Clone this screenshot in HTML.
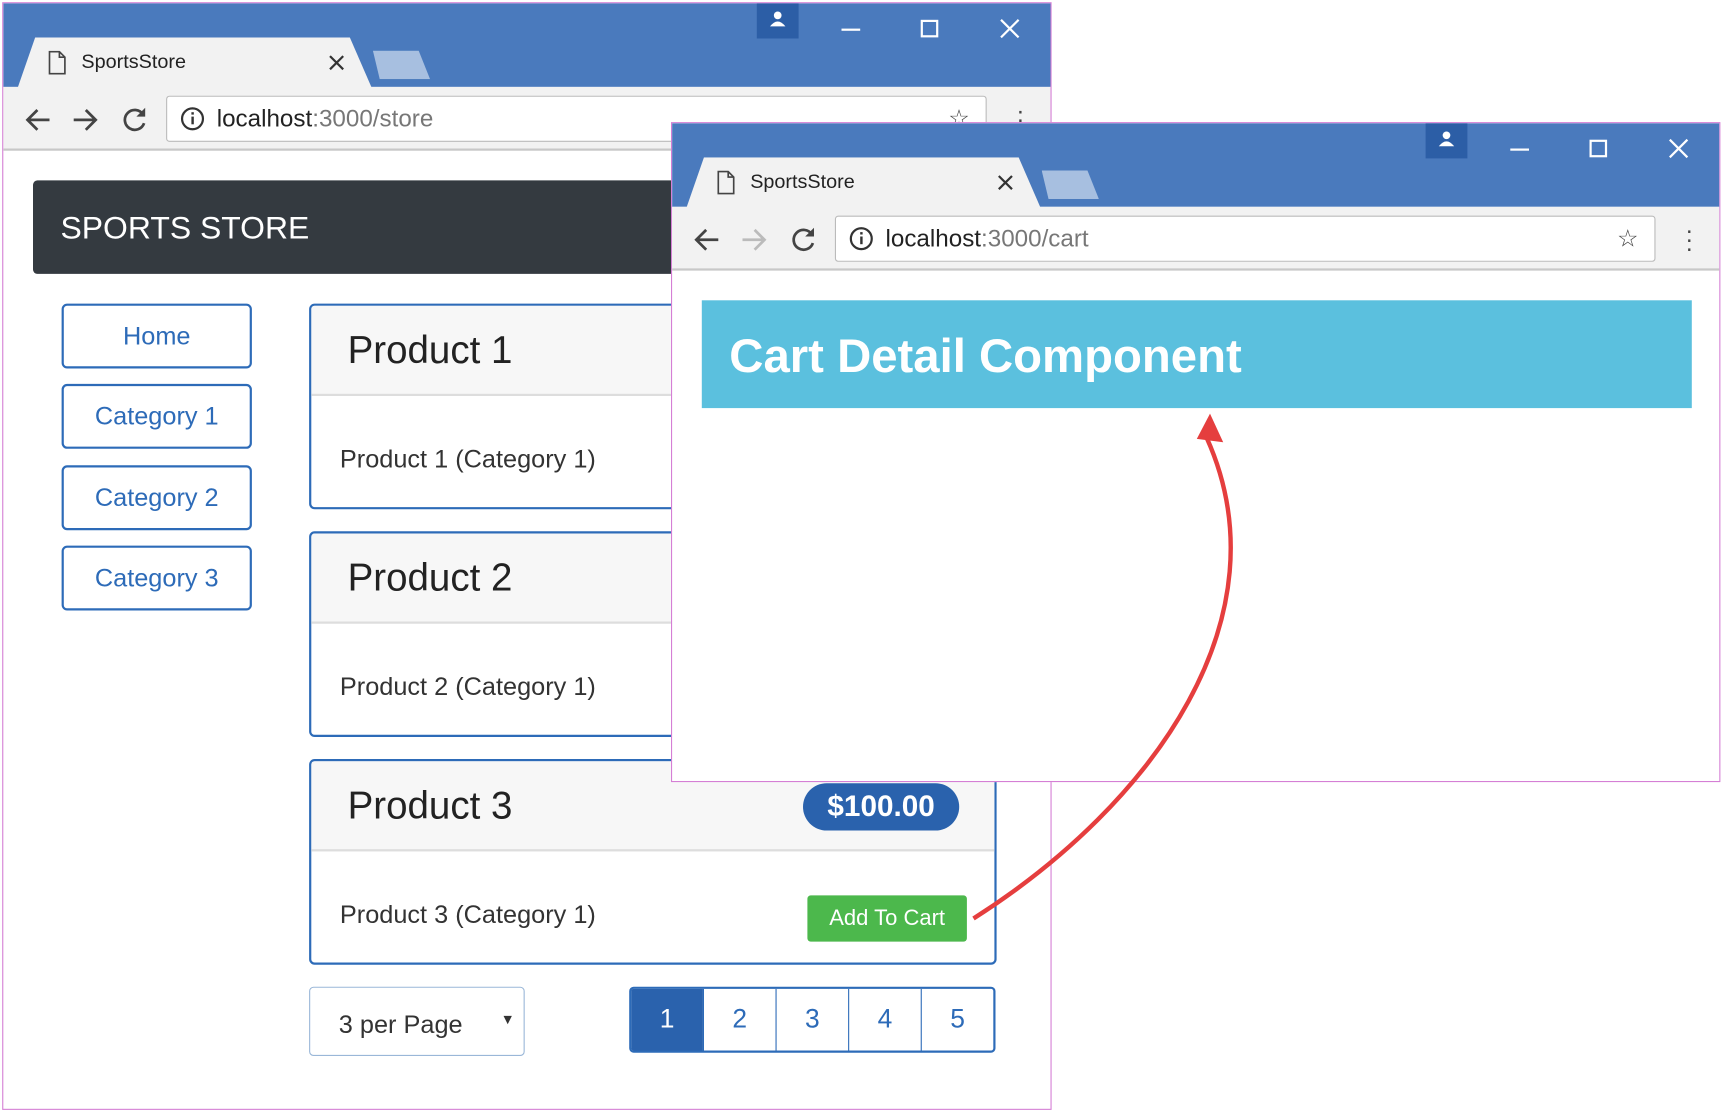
<!DOCTYPE html>
<html><head><meta charset="utf-8"><style>
*{box-sizing:border-box;margin:0;padding:0}
html,body{width:1725px;height:1113px;overflow:hidden;background:#fff;font-family:"Liberation Sans",sans-serif}
#s{position:absolute;left:0;top:0;width:1568px;height:1012px;transform:scale(1.1,1.1);transform-origin:0 0}
.a{position:absolute}
.win{position:absolute;border:1.5px solid #d57fd5;background:#fff;overflow:hidden}
.tb{position:absolute;left:0;right:0;top:0;height:76px;background:#4a7abd}
.tool{position:absolute;left:0;right:0;top:76px;height:58px;background:#f2f2f2;border-bottom:2px solid #c8c8c8}
.tab{position:absolute;top:31px;height:46px;background:#f2f2f2;clip-path:polygon(0 100%,16px 0,calc(100% - 20px) 0,100% 100%)}
.addr{position:absolute;top:8px;height:42px;background:#fff;border:1.5px solid #bbb;border-radius:3px;font-size:22px;color:#222;line-height:39px;padding-left:45px}
.addr span{color:#777}
.btn{position:absolute;left:53px;width:173px;height:59px;border:2px solid #2d6bb8;border-radius:5px;color:#2d6bb8;font-size:23px;text-align:center;line-height:55px}
.card{position:absolute;left:278px;width:625px;height:187px;border:2px solid #2d6bb8;border-radius:5px;overflow:hidden}
.card .h{height:82px;background:#f7f7f7;border-bottom:2px solid #ddd;font-size:35px;padding-left:33px;line-height:82px;color:#222}
.card .b{font-size:23px;color:#333;padding-left:26px;line-height:114px}
</style></head><body><div id="s">
<!-- window 1 -->
<div class="win" style="left:2px;top:2px;width:954px;height:1007px">
 <div class="tb"></div>
 <div class="a" style="left:685px;top:0;width:38px;height:32px;background:#2c5ea6"></div>
 <svg class="a" style="left:695px;top:6px" width="18" height="16"><circle cx="9" cy="5" r="3.5" fill="#fff"/><path d="M2 15 Q9 6 16 15Z" fill="#fff"/></svg>
 <div class="a" style="left:762px;top:23px;width:17px;height:2px;background:#fff"></div>
 <div class="a" style="left:834px;top:15px;width:16px;height:16px;border:2px solid #fff"></div>
 <svg class="a" style="left:905px;top:13px" width="20" height="20"><path d="M2 2L18 18M18 2L2 18" stroke="#fff" stroke-width="2"/></svg>
 <div class="tab" style="left:13px;width:322px"></div>
 <div class="a" style="left:336px;top:43px;width:52px;height:26px;background:#a7bfe0;clip-path:polygon(0 0,80% 0,100% 100%,12% 100%)"></div>
 <svg class="a" style="left:40px;top:43px" width="18" height="22"><path d="M2 1H11L16 6V21H2Z M11 1V6H16" fill="none" stroke="#444" stroke-width="1.5"/></svg>
 <div class="a" style="left:71px;top:43px;font-size:18px;color:#222">SportsStore</div>
 <svg class="a" style="left:295px;top:46px" width="16" height="16"><path d="M2 2L14 14M14 2L2 14" stroke="#333" stroke-width="2"/></svg>
 <div class="tool">
  <svg class="a" style="left:18px;top:18px" width="26" height="24"><path d="M24 12H4M13 3L4 12L13 21" fill="none" stroke="#444" stroke-width="2.5"/></svg>
  <svg class="a" style="left:62px;top:18px" width="26" height="24"><path d="M2 12H22M13 3L22 12L13 21" fill="none" stroke="#444" stroke-width="2.5"/></svg>
  <svg class="a" style="left:107px;top:17px" width="26" height="26"><path d="M20 8A9 9 0 1 0 21 16" fill="none" stroke="#444" stroke-width="2.5"/><path d="M22 2V10H14Z" fill="#444"/></svg>
  <div class="addr" style="left:148px;width:746px">localhost<span>:3000/store</span>
   <svg class="a" style="left:12px;top:9px" width="22" height="22"><circle cx="11" cy="11" r="9.5" fill="none" stroke="#333" stroke-width="2"/><rect x="10" y="9" width="2.2" height="7" fill="#333"/><rect x="10" y="5" width="2.2" height="2.2" fill="#333"/></svg>
   <div class="a" style="left:710px;top:0;font-size:22px;color:#444">☆</div>
  </div>
  <div class="a" style="left:921px;top:18px;font-size:22px;color:#444;line-height:8px">·<br>·<br>·</div>
 </div>
 <div class="a" style="left:27px;top:161px;width:900px;height:85px;background:#343a40;border-radius:4px;color:#fff;font-size:29px;line-height:88px;padding-left:25px">SPORTS STORE</div>
 <div class="btn" style="top:273px">Home</div>
 <div class="btn" style="top:346px">Category 1</div>
 <div class="btn" style="top:420px">Category 2</div>
 <div class="btn" style="top:493px">Category 3</div>
 <div class="card" style="top:273px"><div class="h">Product 1</div><div class="b">Product 1 (Category 1)</div></div>
 <div class="card" style="top:480px"><div class="h">Product 2</div><div class="b">Product 2 (Category 1)</div></div>
 <div class="card" style="top:687px"><div class="h">Product 3</div><div class="b">Product 3 (Category 1)</div>
  <div class="a" style="left:447px;top:20px;width:142px;height:43px;background:#2a62ad;border-radius:22px;color:#fff;font-weight:bold;font-size:27px;text-align:center;line-height:43px">$100.00</div>
  <div class="a" style="left:451px;top:122px;width:145px;height:42px;background:#4cb84c;border-radius:3px;color:#fff;font-size:20px;text-align:center;line-height:42px">Add To Cart</div>
 </div>
 <div class="a" style="left:278px;top:894px;width:196px;height:63px;border:1.5px solid #9ab7d8;border-radius:4px;font-size:23px;color:#333;line-height:66px;padding-left:26px">3 per Page<span style="position:absolute;right:8px;top:-4px;font-size:13px">▼</span></div>
 <div class="a" style="left:569px;top:894px;width:333px;height:60px;border:2px solid #2d6bb8;border-radius:4px;display:flex;overflow:hidden">
  <div style="flex:1;background:#2a62ad;color:#fff;font-size:24px;text-align:center;line-height:56px">1</div>
  <div style="flex:1;border-left:1.5px solid #2d6bb8;color:#2d6bb8;font-size:24px;text-align:center;line-height:56px">2</div>
  <div style="flex:1;border-left:1.5px solid #2d6bb8;color:#2d6bb8;font-size:24px;text-align:center;line-height:56px">3</div>
  <div style="flex:1;border-left:1.5px solid #2d6bb8;color:#2d6bb8;font-size:24px;text-align:center;line-height:56px">4</div>
  <div style="flex:1;border-left:1.5px solid #2d6bb8;color:#2d6bb8;font-size:24px;text-align:center;line-height:56px">5</div>
 </div>
</div>
<!-- window 2 -->
<div class="win" style="left:610px;top:111px;width:954px;height:600px">
 <div class="tb"></div>
 <div class="a" style="left:685px;top:0;width:38px;height:32px;background:#2c5ea6"></div>
 <svg class="a" style="left:695px;top:6px" width="18" height="16"><circle cx="9" cy="5" r="3.5" fill="#fff"/><path d="M2 15 Q9 6 16 15Z" fill="#fff"/></svg>
 <div class="a" style="left:762px;top:23px;width:17px;height:2px;background:#fff"></div>
 <div class="a" style="left:834px;top:15px;width:16px;height:16px;border:2px solid #fff"></div>
 <svg class="a" style="left:905px;top:13px" width="20" height="20"><path d="M2 2L18 18M18 2L2 18" stroke="#fff" stroke-width="2"/></svg>
 <div class="tab" style="left:13px;width:322px"></div>
 <div class="a" style="left:336px;top:43px;width:52px;height:26px;background:#a7bfe0;clip-path:polygon(0 0,80% 0,100% 100%,12% 100%)"></div>
 <svg class="a" style="left:40px;top:43px" width="18" height="22"><path d="M2 1H11L16 6V21H2Z M11 1V6H16" fill="none" stroke="#444" stroke-width="1.5"/></svg>
 <div class="a" style="left:71px;top:43px;font-size:18px;color:#222">SportsStore</div>
 <svg class="a" style="left:295px;top:46px" width="16" height="16"><path d="M2 2L14 14M14 2L2 14" stroke="#333" stroke-width="2"/></svg>
 <div class="tool">
  <svg class="a" style="left:18px;top:18px" width="26" height="24"><path d="M24 12H4M13 3L4 12L13 21" fill="none" stroke="#444" stroke-width="2.5"/></svg>
  <svg class="a" style="left:62px;top:18px" width="26" height="24"><path d="M2 12H22M13 3L22 12L13 21" fill="none" stroke="#bbb" stroke-width="2.5"/></svg>
  <svg class="a" style="left:107px;top:17px" width="26" height="26"><path d="M20 8A9 9 0 1 0 21 16" fill="none" stroke="#444" stroke-width="2.5"/><path d="M22 2V10H14Z" fill="#444"/></svg>
  <div class="addr" style="left:148px;width:746px">localhost<span>:3000/cart</span>
   <svg class="a" style="left:12px;top:9px" width="22" height="22"><circle cx="11" cy="11" r="9.5" fill="none" stroke="#333" stroke-width="2"/><rect x="10" y="9" width="2.2" height="7" fill="#333"/><rect x="10" y="5" width="2.2" height="2.2" fill="#333"/></svg>
   <div class="a" style="left:710px;top:0;font-size:22px;color:#444">☆</div>
  </div>
  <div class="a" style="left:921px;top:18px;font-size:22px;color:#444;line-height:8px">·<br>·<br>·</div>
 </div>
 <div class="a" style="left:27px;top:161px;width:900px;height:98px;background:#5bc0de;color:#fff;font-size:43px;font-weight:bold;line-height:102px;padding-left:25px">Cart Detail Component</div>
</div>
<svg class="a" style="left:0;top:0" width="1568" height="1012"><path d="M885 835 C1050 730 1170 560 1097 398" fill="none" stroke="#e53e3e" stroke-width="4"/><path d="M1100 376 L1112 402 L1088 399Z" fill="#e53e3e"/></svg>
</div></body></html>
